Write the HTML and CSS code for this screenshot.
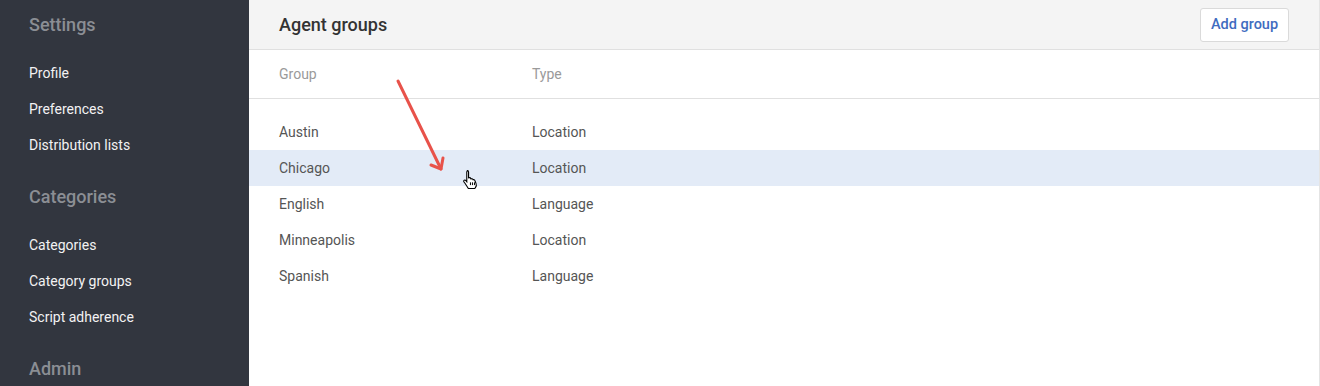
FILE: index.html
```html
<!DOCTYPE html>
<html lang="en">
<head>
    <meta charset="UTF-8">
    <title>Agent groups - Settings</title>
    <link rel="stylesheet" href="styles.css">
</head>
<body>
    <div class="app">
        <!-- Sidebar -->
        <nav class="sidebar">
            <div class="nav-section">
                <h3 class="nav-title">Settings</h3>
                <a class="nav-link" href="#">Profile</a>
                <a class="nav-link" href="#">Preferences</a>
                <a class="nav-link" href="#">Distribution lists</a>
            </div>
            <div class="nav-section">
                <h3 class="nav-title">Categories</h3>
                <a class="nav-link" href="#">Categories</a>
                <a class="nav-link" href="#">Category groups</a>
                <a class="nav-link" href="#">Script adherence</a>
            </div>
            <div class="nav-section">
                <h3 class="nav-title">Admin</h3>
            </div>
        </nav>

        <!-- Main content -->
        <main class="main">
            <div class="page-header">
                <h2>Agent groups</h2>
                <button class="add-btn">Add group</button>
            </div>

            <table class="groups">
                <thead>
                    <tr>
                        <th>Group</th>
                        <th>Type</th>
                    </tr>
                </thead>
                <tbody>
                    <tr class="spacer"><td colspan="2"></td></tr>
                    <tr><td>Austin</td><td>Location</td></tr>
                    <tr class="hover"><td>Chicago</td><td>Location</td></tr>
                    <tr><td>English</td><td>Language</td></tr>
                    <tr><td>Minneapolis</td><td>Location</td></tr>
                    <tr><td>Spanish</td><td>Language</td></tr>
                </tbody>
            </table>

            <!-- annotation: arrow + cursor -->
            <svg class="annotation" width="260" height="200" viewBox="0 0 260 200">
                <g stroke="#e8524a" stroke-width="3" stroke-linecap="round" stroke-linejoin="round" fill="none">
                    <line x1="149" y1="81" x2="192" y2="169"/>
                    <polyline points="182,165 192,169 194,158"/>
                </g>
            </svg>
            <svg class="cursor" width="18" height="20" viewBox="0 0 16 18">
                <path d="M4.5 1.5c.8 0 1.3.6 1.3 1.3v5.2l.4-.1c.7-.2 1.4.1 1.6.7l.2.4c.6-.4 1.5-.2 1.8.5l.1.2c.6-.3 1.4 0 1.6.6l1 2.6c.5 1.3.3 2.6-.4 3.6l-.7 1H5.6l-2.7-4.2-1.2-1.6c-.4-.6-.3-1.3.2-1.6.5-.3 1.1-.2 1.5.3l.8 1V2.8c0-.7.5-1.3 1.3-1.3z" fill="#fff" stroke="#000" stroke-width="1"/>
                <path d="M7.5 12v2.5M9.3 12v2.5M11.1 12v2.5" stroke="#000" stroke-width="0.9"/>
            </svg>
        </main>
    </div>
</body>
</html>
```

FILE: styles.css
```css
* {
    box-sizing: border-box;
}

body {
    margin: 0;
    padding: 0;
    font-family: Roboto, "Liberation Sans", Arial, sans-serif;
    background-color: #fff;
}

.app {
    display: flex;
    height: 386px;
    overflow: hidden;
}

/* Sidebar */
.sidebar {
    width: 249px;
    flex-shrink: 0;
    background-color: #32363f;
    padding-left: 29px;
    padding-top: 1px;
}

.nav-section {
    display: flex;
    flex-direction: column;
    padding-bottom: 10px;
}

.nav-title {
    margin: 0 0 6px 0;
    height: 48px;
    line-height: 48px;
    font-size: 18px;
    font-weight: 500;
    color: #8b8e94;
}

.nav-link {
    display: block;
    height: 36px;
    line-height: 36px;
    font-size: 14px;
    color: #f2f2f3;
    text-decoration: none;
}

/* Main */
.main {
    flex: 1;
    position: relative;
    border-right: 1px solid #e4e4e4;
}

.page-header {
    display: flex;
    align-items: center;
    justify-content: space-between;
    height: 50px;
    padding: 0 30px 0 30px;
    background-color: #f4f4f4;
    border-bottom: 1px solid #e0e0e0;
}

.page-header h2 {
    margin: 0;
    font-size: 18px;
    font-weight: 500;
    color: #333;
}

.add-btn {
    width: 89px;
    height: 34px;
    padding: 0;
    background-color: #fff;
    border: 1px solid #dadada;
    border-radius: 3px;
    font-family: inherit;
    font-size: 14.5px;
    font-weight: 500;
    color: #3f6cc0;
    cursor: pointer;
}

.groups {
    width: 100%;
    border-collapse: collapse;
}

.groups th {
    height: 48px;
    padding: 0;
    text-align: left;
    font-size: 14px;
    font-weight: 400;
    color: #9a9a9a;
    border-bottom: 1px solid #e0e0e0;
}

.groups th:first-child,
.groups td:first-child {
    padding-left: 30px;
    width: 283px;
}

.groups td {
    height: 36px;
    padding: 0;
    font-size: 14px;
    color: #555;
}

.groups .spacer td {
    height: 16px;
}

.groups tr.hover td {
    background-color: #e3ebf7;
}

.annotation {
    position: absolute;
    left: 0;
    top: 0;
    pointer-events: none;
}

.cursor {
    position: absolute;
    left: 213px;
    top: 169px;
}
```
